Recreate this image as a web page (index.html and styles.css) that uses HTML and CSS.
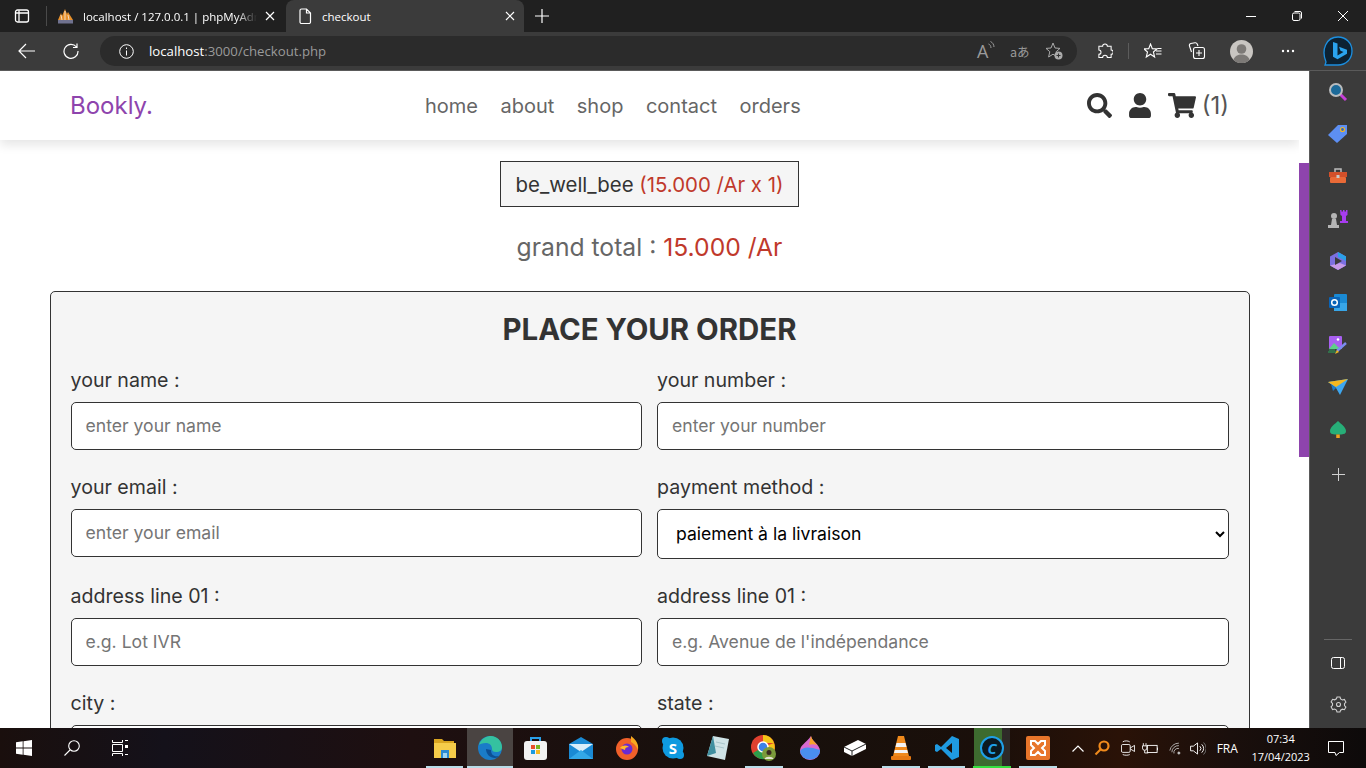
FILE: index.html
```html
<!DOCTYPE html>
<html lang="en">
<head>
    <meta charset="UTF-8">
    <meta name="viewport" content="width=device-width, initial-scale=1.0">
    <title>checkout</title>
    <link rel="stylesheet" href="styles.css">
</head>
<body>

<!-- Browser tabs -->
<div class="tab-strip">
    <div class="strip-btn">
        <svg width="16" height="16" viewBox="0 0 16 16" fill="none" stroke="#fff" stroke-width="1.3"><rect x="1.5" y="2" width="13" height="12" rx="2"/><path d="M5 2.5v11M1.5 5h13"/></svg>
    </div>
    <div class="strip-sep"></div>
    <div class="tab">
        <svg class="tab-icon" width="17" height="16" viewBox="0 0 17 16"><path d="M1 12l3-7 1 3 3-7 2 5 1-2 5 8z" fill="#e8912c"/><path d="M4 7l1 5M8 3v9M11 7l1 5" stroke="#fff" stroke-width=".7"/><rect x="1" y="12" width="15" height="3.5" fill="#70728f"/></svg>
        <span class="tab-title fade">localhost / 127.0.0.1 | phpMyAdmin</span>
        <svg class="tab-x" width="10" height="10" viewBox="0 0 10 10" stroke="#fff" stroke-width="1.2"><path d="M1 1l8 8M9 1L1 9"/></svg>
    </div>
    <div class="tab active">
        <svg class="tab-icon" width="14" height="16" viewBox="0 0 14 16" fill="none" stroke="#fff" stroke-width="1.2"><path d="M2 2.5a1.500 1.500 0 0 1 1.500-1.500H8.500L12.500 5v9a1.500 1.500 0 0 1-1.500 1.500H3.500A1.500 1.500 0 0 1 2 14zM8.500 1v4h4"/></svg>
        <span class="tab-title">checkout</span>
        <svg class="tab-x" width="10" height="10" viewBox="0 0 10 10" stroke="#fff" stroke-width="1.2"><path d="M1 1l8 8M9 1L1 9"/></svg>
    </div>
    <div class="strip-btn plus">
        <svg width="14" height="14" viewBox="0 0 14 14" stroke="#fff" stroke-width="1.2"><path d="M7 0v14M0 7h14"/></svg>
    </div>
    <div class="window-btns">
        <div class="window-btn"><svg width="10" height="10" viewBox="0 0 10 10" stroke="#fff"><path d="M0 5.500h10"/></svg></div>
        <div class="window-btn"><svg width="10" height="10" viewBox="0 0 10 10" fill="none" stroke="#fff"><rect x=".5" y="2" width="7.500" height="7.500" rx="1.500"/><path d="M2.500 .5h5.500a1.500 1.500 0 0 1 1.500 1.500v5.500"/></svg></div>
        <div class="window-btn"><svg width="10" height="10" viewBox="0 0 10 10" stroke="#fff"><path d="M0 0l10 10M10 0L0 10"/></svg></div>
    </div>
</div>

<!-- Address bar row -->
<div class="toolbar">
    <div class="tool-btn back">
        <svg width="18" height="16" viewBox="0 0 18 16" fill="none" stroke="#fff" stroke-width="1.2"><path d="M17 8H1M8 1L1 8l7 7"/></svg>
    </div>
    <div class="tool-btn reload">
        <svg width="16" height="16" viewBox="0 0 16 16" fill="none" stroke="#fff" stroke-width="1.2"><path d="M13.500 4A7 7 0 1 0 15 8M14 .5V4.500h-4"/></svg>
    </div>
    <div class="address-bar">
        <svg class="info-icon" width="15" height="15" viewBox="0 0 15 15" fill="none" stroke="#fff"><circle cx="7.500" cy="7.500" r="6.800"/><path d="M7.500 6.500v5M7.500 3.500v1.500"/></svg>
        <span class="url"><b>localhost</b>:3000/checkout.php</span>
        <div class="address-icons">
            <span class="read-aloud">A<svg width="7" height="10" viewBox="0 0 7 10" fill="none" stroke="#9a9a9a"><path d="M.5 3c1.500 .5 2.500 2 2.500 4M2.500 .5c2 1 3.500 3 3.500 5.500"/></svg></span>
            <span class="translate">aあ</span>
            <svg width="18" height="18" viewBox="0 0 18 18" fill="none" stroke="#aaa"><path d="M8 1l2 5 5 .4-3.800 3.300L12.400 15 8 12.200 3.600 15l1.200-5.300L1 6.400 6 6z"/><circle cx="13.500" cy="13.500" r="4" fill="#aaa" stroke="none"/><path d="M13.500 11.500v4M11.500 13.500h4" stroke="#333"/></svg>
        </div>
    </div>
    <div class="tool-icons">
        <div class="tool-icon">
            <svg width="16" height="16" viewBox="0 0 17 17" fill="none" stroke="#fff" stroke-width="1.100"><path d="M6 3.500a2.500 2.500 0 0 1 5 0h4v4a2.200 2.200 0 0 1 0 4.500v3.500H11a2.500 2.500 0 0 0-5 0H2V12a2.200 2.200 0 0 0 0-4.500V3.500z"/></svg>
        </div>
        <div class="tool-sep"></div>
        <div class="tool-icon">
            <svg width="18" height="17" viewBox="0 0 18 17" fill="none" stroke="#fff" stroke-width="1.100"><path d="M6.500 1l1.800 4.600 4.700.3-3.600 3.100 1.200 5-4.100-2.800-4.200 2.800L3.500 9 0 5.900l4.700-.3zM12 8h5.500M13.500 5.500h4M12 11h5.500"/></svg>
        </div>
        <div class="tool-icon">
            <svg width="18" height="18" viewBox="0 0 18 18" fill="none" stroke="#fff" stroke-width="1.100"><rect x="5.500" y="5.500" width="11" height="11" rx="2"/><path d="M11 8v6M8 11h6M3.500 10L1.500 4a2 2 0 0 1 1.300-2.500L7 .8a2 2 0 0 1 2.200 1.200l.8 2"/></svg>
        </div>
        <div class="tool-icon">
            <svg width="23" height="23" viewBox="0 0 23 23"><circle cx="11.500" cy="11.500" r="11.500" fill="#c9c6c2"/><circle cx="11.500" cy="9" r="4.800" fill="#7d7a77"/><path d="M3.500 20c1-4 4.500-5.500 8-5.500s7 1.500 8 5.500a11.500 11.500 0 0 1-16 0z" fill="#7d7a77"/></svg>
        </div>
        <div class="tool-icon more">
            <svg width="14" height="4" viewBox="0 0 14 4" fill="#fff"><circle cx="2" cy="2" r="1.200"/><circle cx="7" cy="2" r="1.200"/><circle cx="12" cy="2" r="1.200"/></svg>
        </div>
    </div>
    <div class="bing-logo">
        <svg width="30" height="31" viewBox="0 0 30 31"><path d="M3 26C-2 14 3 1 15 1c8 0 14 6 14 14s-6 14-14 14H2z" fill="#0c2233" stroke="#1c8fe0" stroke-width="1.300"/><path d="M10 6l4.500 1.500v12l6-3.500-3-1.300-1.500-4 8 3v4l-9.500 5.500-4.500-2.500z" fill="#2aa3ee"/></svg>
    </div>
</div>

<div class="main-row">
    <div class="page">
        <header class="header">
            <a class="logo" href="#">Bookly.</a>
            <nav class="navbar">
                <a href="#">home</a>
                <a href="#">about</a>
                <a href="#">shop</a>
                <a href="#">contact</a>
                <a href="#">orders</a>
            </nav>
            <div class="icons">
                <svg width="25" height="25" viewBox="0 0 512 512"><path d="M505 442.7L405.300 343c-4.500-4.500-10.600-7-17-7H372c27.600-35.300 44-79.700 44-128C416 93.100 322.900 0 208 0S0 93.100 0 208s93.100 208 208 208c48.300 0 92.700-16.400 128-44v16.300c0 6.400 2.500 12.500 7 17l99.700 99.700c9.400 9.400 24.600 9.400 33.900 0l28.300-28.300c9.400-9.400 9.400-24.600.1-34zM208 336c-70.700 0-128-57.200-128-128 0-70.700 57.200-128 128-128 70.700 0 128 57.200 128 128 0 70.700-57.200 128-128 128z"/></svg>
                <svg width="22" height="25" viewBox="0 0 448 512"><path d="M224 256c70.700 0 128-57.300 128-128S294.700 0 224 0 96 57.300 96 128s57.300 128 128 128zm89.600 32h-16.700c-22.200 10.200-46.900 16-72.900 16s-50.600-5.800-72.900-16h-16.700C60.200 288 0 348.200 0 422.400V464c0 26.500 21.500 48 48 48h352c26.500 0 48-21.500 48-48v-41.600c0-74.200-60.200-134.400-134.400-134.400z"/></svg>
                <span class="cart">
                    <svg width="28" height="25" viewBox="0 0 576 512"><path d="M528.120 301.319l47.273-208C578.806 78.301 567.391 64 551.990 64H159.208l-9.166-44.810C147.758 8.021 137.930 0 126.529 0H24C10.745 0 0 10.745 0 24v16c0 13.255 10.745 24 24 24h69.883l70.248 343.435C147.325 417.100 136 435.222 136 456c0 30.928 25.072 56 56 56s56-25.072 56-56c0-15.674-6.447-29.835-16.824-40h209.647C430.447 426.165 424 440.326 424 456c0 30.928 25.072 56 56 56s56-25.072 56-56c0-22.172-12.888-41.332-31.579-50.405l5.517-24.276c3.413-15.018-8.002-29.319-23.403-29.319H218.117l-6.545-32h293.145c11.206 0 20.920-7.754 23.403-18.681z"/></svg>
                    <span class="cart-count">(1)</span>
                </span>
            </div>
        </header>

        <section class="display-order">
            <p class="order-item">be_well_bee <span>(15.000 /Ar x 1)</span></p>
            <div class="grand-total">grand total : <span>15.000 /Ar</span></div>
        </section>

        <section class="checkout">
            <form>
                <h3>place your order</h3>
                <div class="flex">
                    <div class="inputBox">
                        <label>your name :</label>
                        <input type="text" placeholder="enter your name">
                    </div>
                    <div class="inputBox">
                        <label>your number :</label>
                        <input type="text" placeholder="enter your number">
                    </div>
                    <div class="inputBox">
                        <label>your email :</label>
                        <input type="text" placeholder="enter your email">
                    </div>
                    <div class="inputBox">
                        <label>payment method :</label>
                        <select>
                            <option>paiement à la livraison</option>
                        </select>
                    </div>
                    <div class="inputBox">
                        <label>address line 01 :</label>
                        <input type="text" placeholder="e.g. Lot IVR">
                    </div>
                    <div class="inputBox">
                        <label>address line 01 :</label>
                        <input type="text" placeholder="e.g. Avenue de l'indépendance">
                    </div>
                    <div class="inputBox">
                        <label>city :</label>
                        <input type="text">
                    </div>
                    <div class="inputBox">
                        <label>state :</label>
                        <input type="text">
                    </div>
                </div>
            </form>
        </section>
    </div>

    <div class="scrollbar"><div class="scroll-thumb"></div></div>

    <!-- Edge sidebar -->
    <aside class="sidebar">
        <div class="side-icon"><svg width="20" height="20" viewBox="0 0 20 20"><path d="M12 12l6 6" stroke="#c63fd8" stroke-width="3"/><circle cx="8" cy="8" r="6" fill="#1c6a99" stroke="#b9bcbe" stroke-width="2"/></svg></div>
        <div class="side-icon"><svg width="20" height="20" viewBox="0 0 20 20"><path d="M0 11L10 1h9v9L9 19z" fill="#5d8ff3"/><circle cx="14.500" cy="5.500" r="2" fill="#2c63c8" stroke="#f5b81f" stroke-width="1.200"/></svg></div>
        <div class="side-icon"><svg width="20" height="18" viewBox="0 0 20 18"><path d="M7 5V2h6v3" fill="none" stroke="#bdbdbd" stroke-width="1.500"/><rect x="1" y="5" width="18" height="5" fill="#d2502a"/><rect x="2" y="10" width="16" height="6" rx="1" fill="#e96a37"/><rect x="8.500" y="8" width="3" height="3" fill="#c9c9c9"/></svg></div>
        <div class="side-icon"><svg width="20" height="20" viewBox="0 0 20 20"><path d="M12 1h1.500v1.500H15V1h1.500v1.500H18V1h1.500v5l-1.500 1v5h2v2h-8v-2h2V7l-1.500-1z" fill="#a83cf0"/><circle cx="6" cy="7" r="3" fill="#b5b5b5"/><path d="M4 10h4l1 6h2v3H0v-3h3z" fill="#b5b5b5"/></svg></div>
        <div class="side-icon"><svg width="18" height="18" viewBox="0 0 18 18"><path d="M9 0l8 4.500v9L9 18l-8-4.500v-9z" fill="#7b6fe0"/><path d="M9 0l8 4.500V9L9 5z" fill="#2aa0e8"/><path d="M1 13.500L9 18l8-4.500L11 11z" fill="#c79be8"/><path d="M6 5l7 4-7 4z" fill="#3b3b3b"/></svg></div>
        <div class="side-icon"><svg width="18" height="18" viewBox="0 0 18 18"><rect x="5" y="0" width="13" height="17" rx="1" fill="#1a8ad4"/><path d="M5 9h13v8H5z" fill="#38a6e8"/><rect x="0" y="3" width="11" height="11" rx="1" fill="#0a64b8"/><circle cx="5.500" cy="8.500" r="2.800" fill="none" stroke="#fff" stroke-width="1.500"/></svg></div>
        <div class="side-icon"><svg width="20" height="20" viewBox="0 0 20 20"><rect x="1" y="1" width="13" height="13" rx="1" fill="#a85ff0"/><path d="M1 14l5-6 4 4 4 2z" fill="#5fcf8a"/><path d="M0 17h8M1 15h6" stroke="#2aa65c"/><circle cx="10" cy="4.500" r="1.300" fill="#fff"/><path d="M9 16l9-8" stroke="#7a8cf0" stroke-width="2.500"/><path d="M7 19l2-4 2 2z" fill="#f5b81f"/></svg></div>
        <div class="side-icon"><svg width="20" height="16" viewBox="0 0 20 16"><path d="M0 3L20 0l-8 16-4-7z" fill="#3ea6ee"/><path d="M0 3l20-3-12 8z" fill="#f5b81f"/><path d="M3 5l2 7 3-3z" fill="#1a7cc8"/></svg></div>
        <div class="side-icon"><svg width="16" height="20" viewBox="0 0 18 20"><path d="M9 0c3 3 9 7 9 11s-4 4-9 4-9 0-9-4 6-8 9-11z" fill="#27ae78"/><rect x="7" y="15" width="4" height="4" fill="#f0a21f"/></svg></div>
        <div class="side-icon side-plus"><svg width="13" height="13" viewBox="0 0 13 13" stroke="#d0d0d0"><path d="M6.500 0v13M0 6.500h13"/></svg></div>
        <div class="side-bottom">
            <div class="side-line"></div>
            <div class="side-icon"><svg width="14" height="12" viewBox="0 0 14 12" fill="none" stroke="#fff"><rect x=".5" y=".5" width="13" height="11" rx="2"/><path d="M9.500 .5v11"/></svg></div>
            <div class="side-icon"><svg width="17" height="17" viewBox="0 0 17 17" fill="none" stroke="#d0d0d0" stroke-width="1.100"><path d="M7 1h3l.6 2 1.800 1 2-.5 1.500 2.600-1.400 1.500v2l1.400 1.500-1.500 2.600-2-.5-1.800 1L10 16H7l-.6-2-1.800-1-2 .5L1.100 10.900l1.400-1.500v-2L1.100 5.900l1.500-2.600 2 .5 1.800-1z"/><circle cx="8.500" cy="8.500" r="2"/></svg></div>
        </div>
    </aside>
</div>

<!-- Windows taskbar -->
<footer class="taskbar">
    <div class="task-start">
        <div class="task-sys"><svg width="16" height="16" viewBox="0 0 16 16" fill="#fff"><path d="M0 2.300l6.700-1v6.300H0zM7.500 1.200L16 0v7.600H7.500zM0 8.400h6.700v6.300l-6.700-1zM7.500 8.400H16V16l-8.500-1.200z"/></svg></div>
        <div class="task-sys"><svg width="16" height="16" viewBox="0 0 16 16" fill="none" stroke="#fff" stroke-width="1.100"><circle cx="10" cy="6" r="5.300"/><path d="M6 10l-5.500 5.500"/></svg></div>
        <div class="task-sys"><svg width="16" height="16" viewBox="0 0 16 16" fill="none" stroke="#fff"><path d="M.5 0v2.500h10V0M.5 16v-2.500h10V16M.5 4.500h10v7H.5zM13 .5h3M13 14.500h3"/><rect x="13" y="5" width="3" height="3" fill="#fff" stroke="none"/></svg></div>
    </div>
    <div class="task-apps">
        <div class="app open"><svg width="22" height="20" viewBox="0 0 22 20"><path d="M0 1h8l2 2h10v3H0z" fill="#d9a520"/><path d="M0 5h22v15H0z" fill="#f5cc4a"/><path d="M7 12h8v8H7z" fill="#2a8ad4"/><path d="M9 15h4v5H9z" fill="#9ed6f5"/></svg></div>
        <div class="app current"><svg width="24" height="24" viewBox="0 0 24 24"><circle cx="12" cy="12" r="12" fill="#1a7cc8"/><path d="M1 9C3 2 9 0 13 0c6 0 11 5 11 11 0 3-2 5-6 5-3 0-4-1-4-3 0-4-3-6-6-6-4 0-6 1-7 2z" fill="#35c1a0"/><path d="M8 13c0 5 4 9 9 9 2 0 3-1 4-2-5 1-8-1-8-6z" fill="#0c4f94"/></svg></div>
        <div class="app"><svg width="23" height="24" viewBox="0 0 23 24"><path d="M7 6V2h9v4" fill="none" stroke="#2aa0e8" stroke-width="2"/><rect x="0" y="5" width="23" height="19" rx="3" fill="#f2f2f2"/><rect x="7" y="9" width="4" height="4" fill="#e8502a"/><rect x="12" y="9" width="4" height="4" fill="#7ab81e"/><rect x="7" y="14" width="4" height="4" fill="#1a9ae0"/><rect x="12" y="14" width="4" height="4" fill="#f5b81f"/></svg></div>
        <div class="app"><svg width="24" height="22" viewBox="0 0 24 22"><path d="M0 7l12-7 12 7v15H0z" fill="#1a8ad4"/><path d="M0 7h24l-12 8z" fill="#d8eefa"/><path d="M0 22l12-9 12 9z" fill="#33a8e8"/></svg></div>
        <div class="app"><svg width="24" height="24" viewBox="0 0 24 24"><circle cx="12" cy="13" r="11" fill="#f0602a"/><path d="M16 0c5 4 8 8 7 14-2-5-5-7-7-8z" fill="#f7a81f"/><circle cx="12" cy="13" r="5.500" fill="#6a2bd0"/><path d="M5 12c3-3 6-3 9-1-3 0-4 1-4 3z" fill="#ffb92a"/></svg></div>
        <div class="app"><svg width="22" height="22" viewBox="0 0 22 22"><circle cx="11" cy="11" r="10.500" fill="#0f9ae0"/><rect x="0" y="0" width="8" height="8" rx="4" fill="#0f9ae0"/><rect x="14" y="14" width="8" height="8" rx="4" fill="#0f9ae0"/><text x="11" y="16.500" class="skype-s">S</text></svg></div>
        <div class="app"><svg width="22" height="24" viewBox="0 0 22 24"><path d="M6 0l16 3-4 21L0 20z" fill="#cfe3e6"/><path d="M6 0L0 20l9-3z" fill="#3f8fa0"/><path d="M9 6l9 2M8 10l9 2" stroke="#a8c5cb"/></svg></div>
        <div class="app open"><svg width="26" height="26" viewBox="0 0 26 26"><circle cx="12" cy="12" r="12" fill="#e0402f"/><path d="M12 12L2 18a12 12 0 0 0 12 6z" fill="#2d9c4a"/><path d="M12 0a12 12 0 0 1 11 8H12z" fill="#f5c518"/><path d="M23 8a12 12 0 0 1-9 16l-2-12z" fill="#f5c518"/><circle cx="12" cy="12" r="5" fill="#3b82e8" stroke="#fff" stroke-width="1.500"/><circle cx="18" cy="19" r="7" fill="#7a9a3a"/><circle cx="18" cy="17.500" r="2.500" fill="#3a2a20"/><path d="M13.500 24c1-3 8-3 9 0z" fill="#e5e5d5"/></svg></div>
        <div class="app"><svg width="20" height="24" viewBox="0 0 20 24"><path d="M11 0c0 5 9 8 9 15a10 9 0 0 1-20 0c0-6 6-8 11-15z" fill="#d86ad0"/><path d="M0 15c3-4 8-5 20-1a10 9 0 0 1-20 1z" fill="#4a8ef0"/><path d="M11 0c1 4 4 6 6 9-3-1-6-1-8 0z" fill="#f5a42a"/></svg></div>
        <div class="app"><svg width="22" height="16" viewBox="0 0 22 16"><path d="M0 7l14-7 8 4v5L8 16l-8-4z" fill="#fff"/><path d="M0 7l8 4 14-7M8 11v5" fill="none" stroke="#222"/></svg></div>
        <div class="app open"><svg width="20" height="24" viewBox="0 0 20 24"><path d="M7 0h6l5 20H2z" fill="#f08a1c"/><path d="M5.500 7h9l1 4h-11zM3.800 14h12.400l.8 3H3z" fill="#f3f3f3"/><rect x="0" y="20" width="20" height="4" rx="1" fill="#e87a12"/></svg></div>
        <div class="app open"><svg width="24" height="24" viewBox="0 0 24 24"><path d="M17 0l7 3v18l-7 3L6 13l-4 3-2-1V9l2-1 4 3zM17 7l-6 5 6 5z" fill="#1f9ae0"/></svg></div>
        <div class="app running"><svg width="24" height="24" viewBox="0 0 24 24"><circle cx="12" cy="12" r="11" fill="#0b1a22" stroke="#1fa0e8" stroke-width="2"/><text x="12" y="17.500" class="c-letter">C</text></svg></div>
        <div class="app open"><svg width="24" height="24" viewBox="0 0 24 24"><rect width="24" height="24" rx="2" fill="#e8752a"/><path d="M5 5h4l3 3 3-3h4v4l-3 3 3 3v4h-4l-3-3-3 3H5v-4l3-3-3-3z" fill="none" stroke="#fff" stroke-width="2"/></svg></div>
    </div>
    <div class="tray">
        <svg class="tray-chevron" width="12" height="7" viewBox="0 0 12 7" fill="none" stroke="#fff" stroke-width="1.200"><path d="M.5 6.500L6 1l5.500 5.500"/></svg>
        <svg class="tray-search" width="16" height="16" viewBox="0 0 16 16" fill="none" stroke="#f08a1c" stroke-width="2.200"><circle cx="10" cy="6" r="4.500"/><path d="M6.500 9.500L1.500 14.500"/></svg>
        <svg class="tray-cam" width="14" height="16" viewBox="0 0 16 18" fill="none" stroke="#fff"><rect x=".5" y="5" width="10" height="9" rx="1.500"/><path d="M10.500 9l5-3v7l-5-3M2 2c2-1.500 6-1.500 8 0M2 16.500c2 1 6 1 8 0"/></svg>
        <svg class="tray-power" width="16" height="11" viewBox="0 0 18 12" fill="none" stroke="#fff"><rect x="6" y="2.500" width="11" height="8"/><path d="M17.500 5v3M1.500 0v3M4.500 0v3M.5 3h5v2.500a2.500 2.500 0 0 1-5 0zM3 8v3h4"/></svg>
        <svg class="tray-wifi" width="14" height="13" viewBox="0 0 17 15" fill="none" stroke="#c9c9c9"><path d="M1 10a11 11 0 0 1 11-9M3.500 12a8 8 0 0 1 8.500-8M6 13.500a5 5 0 0 1 6-6"/><circle cx="12" cy="13" r="1.300" fill="#c9c9c9"/></svg>
        <svg class="tray-vol" width="16" height="13" viewBox="0 0 17 14" fill="none" stroke="#fff"><path d="M.5 4.500h3L8 1v12L3.500 9.500h-3zM10.500 4.500a3.500 3.500 0 0 1 0 5M12.500 2.500a6 6 0 0 1 0 9"/><path d="M14.500 .5a9 9 0 0 1 0 13" stroke="#777"/></svg>
        <span class="tray-lang">FRA</span>
        <div class="clock"><span>07:34</span><span>17/04/2023</span></div>
        <svg class="tray-note" width="16" height="15" viewBox="0 0 16 15" fill="none" stroke="#fff"><path d="M.5 .5h15v11h-4l-3.500 3-1-3H.5z"/></svg>
    </div>
</footer>

</body>
</html>
```

FILE: styles.css
```css
/* Basic styling */
* {
    box-sizing: border-box;
    margin: 0;
    padding: 0;
}

body {
    width: 1366px;
    height: 768px;
    overflow: hidden;
    display: flex;
    flex-direction: column;
    font-family: 'Inter', sans-serif;
    color: #333;
    background: #fff;
}

a {
    text-decoration: none;
}

svg {
    display: block;
    flex-shrink: 0;
}

/* Tab strip */
.tab-strip {
    height: 32px;
    flex-shrink: 0;
    display: flex;
    align-items: center;
    background: #202020;
    color: #fff;
    font-family: 'Open Sans', sans-serif;
    font-size: 11.5px;
}

.strip-btn {
    width: 46px;
    height: 32px;
    display: flex;
    align-items: center;
    justify-content: center;
    padding-right: 2px;
}

.strip-sep {
    width: 1px;
    height: 20px;
    background: #4a4a4a;
    margin-right: 10px;
}

.tab {
    width: 229px;
    height: 32px;
    display: flex;
    align-items: center;
    padding-right: 11px;
}

.tab.active {
    width: 238px;
    background: #3b3b3b;
    border-radius: 8px 8px 0 0;
    padding: 0 9px 0 12px;
}

.tab-icon {
    margin-right: 9px;
}

.tab.active .tab-icon {
    margin-right: 10px;
}

.tab-title {
    flex: 1;
    overflow: hidden;
    white-space: nowrap;
}

.fade {
    mask-image: linear-gradient(90deg, #000 88%, transparent);
}

.tab-x {
    margin-left: 8px;
}

.plus {
    width: 38px;
}

.window-btns {
    margin-left: auto;
    display: flex;
}

.window-btn {
    width: 46px;
    height: 32px;
    display: flex;
    align-items: center;
    justify-content: center;
}

/* Toolbar */
.toolbar {
    height: 39px;
    flex-shrink: 0;
    display: flex;
    align-items: flex-start;
    padding-top: 4px;
    background: #3b3b3b;
    border-bottom: 1px solid #5a5a5a;
}

.tool-btn {
    height: 30px;
    display: flex;
    align-items: center;
    justify-content: center;
}

.back {
    width: 54px;
}

.reload {
    width: 34px;
    margin-right: 12px;
}

.address-bar {
    width: 977px;
    height: 30px;
    display: flex;
    align-items: center;
    background: #2b2b2b;
    border-radius: 15px;
    padding-left: 19px;
    color: #9a9a9a;
    font-family: 'Open Sans', sans-serif;
    font-size: 13.2px;
}

.info-icon {
    margin-right: 15px;
}

.url b {
    font-weight: 400;
    color: #fff;
}

.address-icons {
    margin-left: auto;
    display: flex;
    align-items: center;
    gap: 17px;
    padding-right: 14px;
}

.read-aloud {
    display: flex;
    width: 16px;
    font-size: 18px;
    line-height: 20px;
}

.translate {
    width: 18px;
    font-family: 'Noto Sans CJK JP', sans-serif;
    font-size: 12.5px;
    white-space: nowrap;
}

.tool-icons {
    display: flex;
    align-items: center;
    height: 30px;
    margin-left: 6px;
}

.tool-icon {
    width: 44.500px;
    display: flex;
    justify-content: center;
}

.tool-sep {
    width: 1px;
    height: 16px;
    background: #5c5c5c;
    margin-right: 2px;
}

.more {
    margin-left: 2px;
}

.bing-logo {
    margin-left: 12px;
    height: 30px;
    display: flex;
    align-items: center;
}

/* Page area */
.main-row {
    flex: 1;
    min-height: 0;
    display: flex;
    overflow: hidden;
}

.page {
    width: 1299px;
    flex-shrink: 0;
    height: 100%;
    overflow: hidden;
}

.scrollbar {
    width: 10px;
    flex-shrink: 0;
    padding-top: 92px;
}

.scroll-thumb {
    height: 294px;
    background: #8e44ad;
}

.header {
    height: 69px;
    display: flex;
    align-items: center;
    justify-content: space-between;
    padding: 0 70px;
    background: #fff;
    box-shadow: 0 5px 10px rgba(0, 0, 0, 0.1);
}

.logo {
    font-size: 24px;
    color: #8e44ad;
}

.navbar {
    display: flex;
    gap: 22.500px;
    margin-right: 14px;
}

.navbar a {
    font-size: 20px;
    color: #666;
}

.icons {
    display: flex;
    align-items: center;
    gap: 17px;
    fill: #333;
}

.cart {
    display: flex;
    align-items: center;
    gap: 6px;
}

.cart-count {
    font-size: 24px;
    color: #555;
}

/* Order summary */
.display-order {
    display: flex;
    flex-direction: column;
    align-items: center;
    padding-top: 21px;
}

.order-item {
    padding: 11px 15px;
    height: 46px;
    font-size: 20.4px;
    line-height: 24px;
    background: #f5f5f5;
    border: 1px solid #333;
}

.order-item span,
.grand-total span {
    color: #c0392b;
}

.grand-total {
    margin-top: 25px;
    font-size: 24.7px;
    line-height: 30px;
    color: #666;
}

/* Checkout form */
.checkout {
    padding-top: 29px;
}

.checkout form {
    width: 1200px;
    margin: 0 auto;
    padding: 21px 20px 20px;
    background: #f5f5f5;
    border: 1px solid #333;
    border-radius: 5px;
}

.checkout h3 {
    height: 34px;
    margin-bottom: 21px;
    font-size: 29.4px;
    line-height: 34px;
    font-weight: 700;
    text-align: center;
    text-transform: uppercase;
}

.flex {
    display: grid;
    grid-template-columns: 1fr 1fr;
    column-gap: 15px;
    row-gap: 25px;
}

.inputBox label {
    display: block;
    height: 24px;
    margin-bottom: 10px;
    font-size: 19.6px;
    line-height: 24px;
}

.inputBox input,
.inputBox select {
    display: block;
    width: 100%;
    height: 48px;
    padding: 0 14px 2px;
    font-family: 'Inter', sans-serif;
    font-size: 17.6px;
    color: #000;
    background: #fff;
    border: 1px solid #333;
    border-radius: 5px;
}

.inputBox select {
    height: 50px;
}

/* Edge sidebar */
.sidebar {
    flex: 1;
    display: flex;
    flex-direction: column;
    background: #3b3b3b;
    border-left: 1px solid #5a5a5a;
}

.side-icon {
    height: 42.200px;
    display: flex;
    align-items: center;
    justify-content: center;
    flex-shrink: 0;
}

.side-plus {
    margin-top: 3px;
}

.side-bottom {
    margin-top: auto;
    padding-bottom: 2px;
}

.side-line {
    height: 1px;
    margin: 0 14px 2px;
    background: #666;
}

/* Taskbar */
.taskbar {
    height: 40px;
    flex-shrink: 0;
    display: flex;
    background: linear-gradient(90deg, #1a0f0d 0%, #14111a 12%, #1e0f10 30%, #17100c 55%, #1a0f0a 72%, #2a1207 82%, #1a0f0c 90%, #0d0a0a 100%);
    color: #fff;
    font-family: 'Open Sans', sans-serif;
    font-size: 12px;
}

.task-start {
    display: flex;
    width: 421.700px;
    flex-shrink: 0;
}

.task-sys {
    width: 48px;
    display: flex;
    align-items: center;
    justify-content: center;
}

.task-apps {
    display: flex;
}

.app {
    width: 45.650px;
    height: 40px;
    display: flex;
    align-items: center;
    justify-content: center;
    border-bottom: 2px solid transparent;
    padding-top: 2px;
}

.open {
    border-image: linear-gradient(90deg, transparent 10%, #b8dce8 10%, #b8dce8 90%, transparent 90%) 1;
}

.current {
    background: #4a4442;
    border-bottom-color: #b8dce8;
}

.running {
    background: linear-gradient(90deg, transparent 10%, #3d6b2f 10%, #3d6b2f 71%, #2e2a28 71%, #2e2a28 90%, transparent 90%);
    border-image: linear-gradient(90deg, transparent 10%, #35e03f 10%, #35e03f 90%, transparent 90%) 1;
}

.skype-s {
    font-size: 15px;
    font-weight: 700;
    fill: #fff;
    text-anchor: middle;
}

.c-letter {
    font-size: 15px;
    font-style: italic;
    font-weight: 700;
    fill: #1fa0e8;
    text-anchor: middle;
}

/* System tray */
.tray {
    flex: 1;
    display: flex;
    align-items: center;
    padding-left: 11px;
}

.tray-chevron {
    margin-right: 10px;
}

.tray-search {
    margin-right: 11px;
}

.tray-cam {
    margin-right: 7px;
}

.tray-power {
    margin-right: 11px;
}

.tray-wifi {
    margin-right: 7px;
}

.tray-lang {
    width: 26px;
    margin-left: 11px;
}

.clock {
    width: 60px;
    margin-left: 8px;
    display: flex;
    flex-direction: column;
    align-items: center;
    font-size: 11px;
    line-height: 18px;
}

.tray-note {
    margin-left: 17px;
}
```
